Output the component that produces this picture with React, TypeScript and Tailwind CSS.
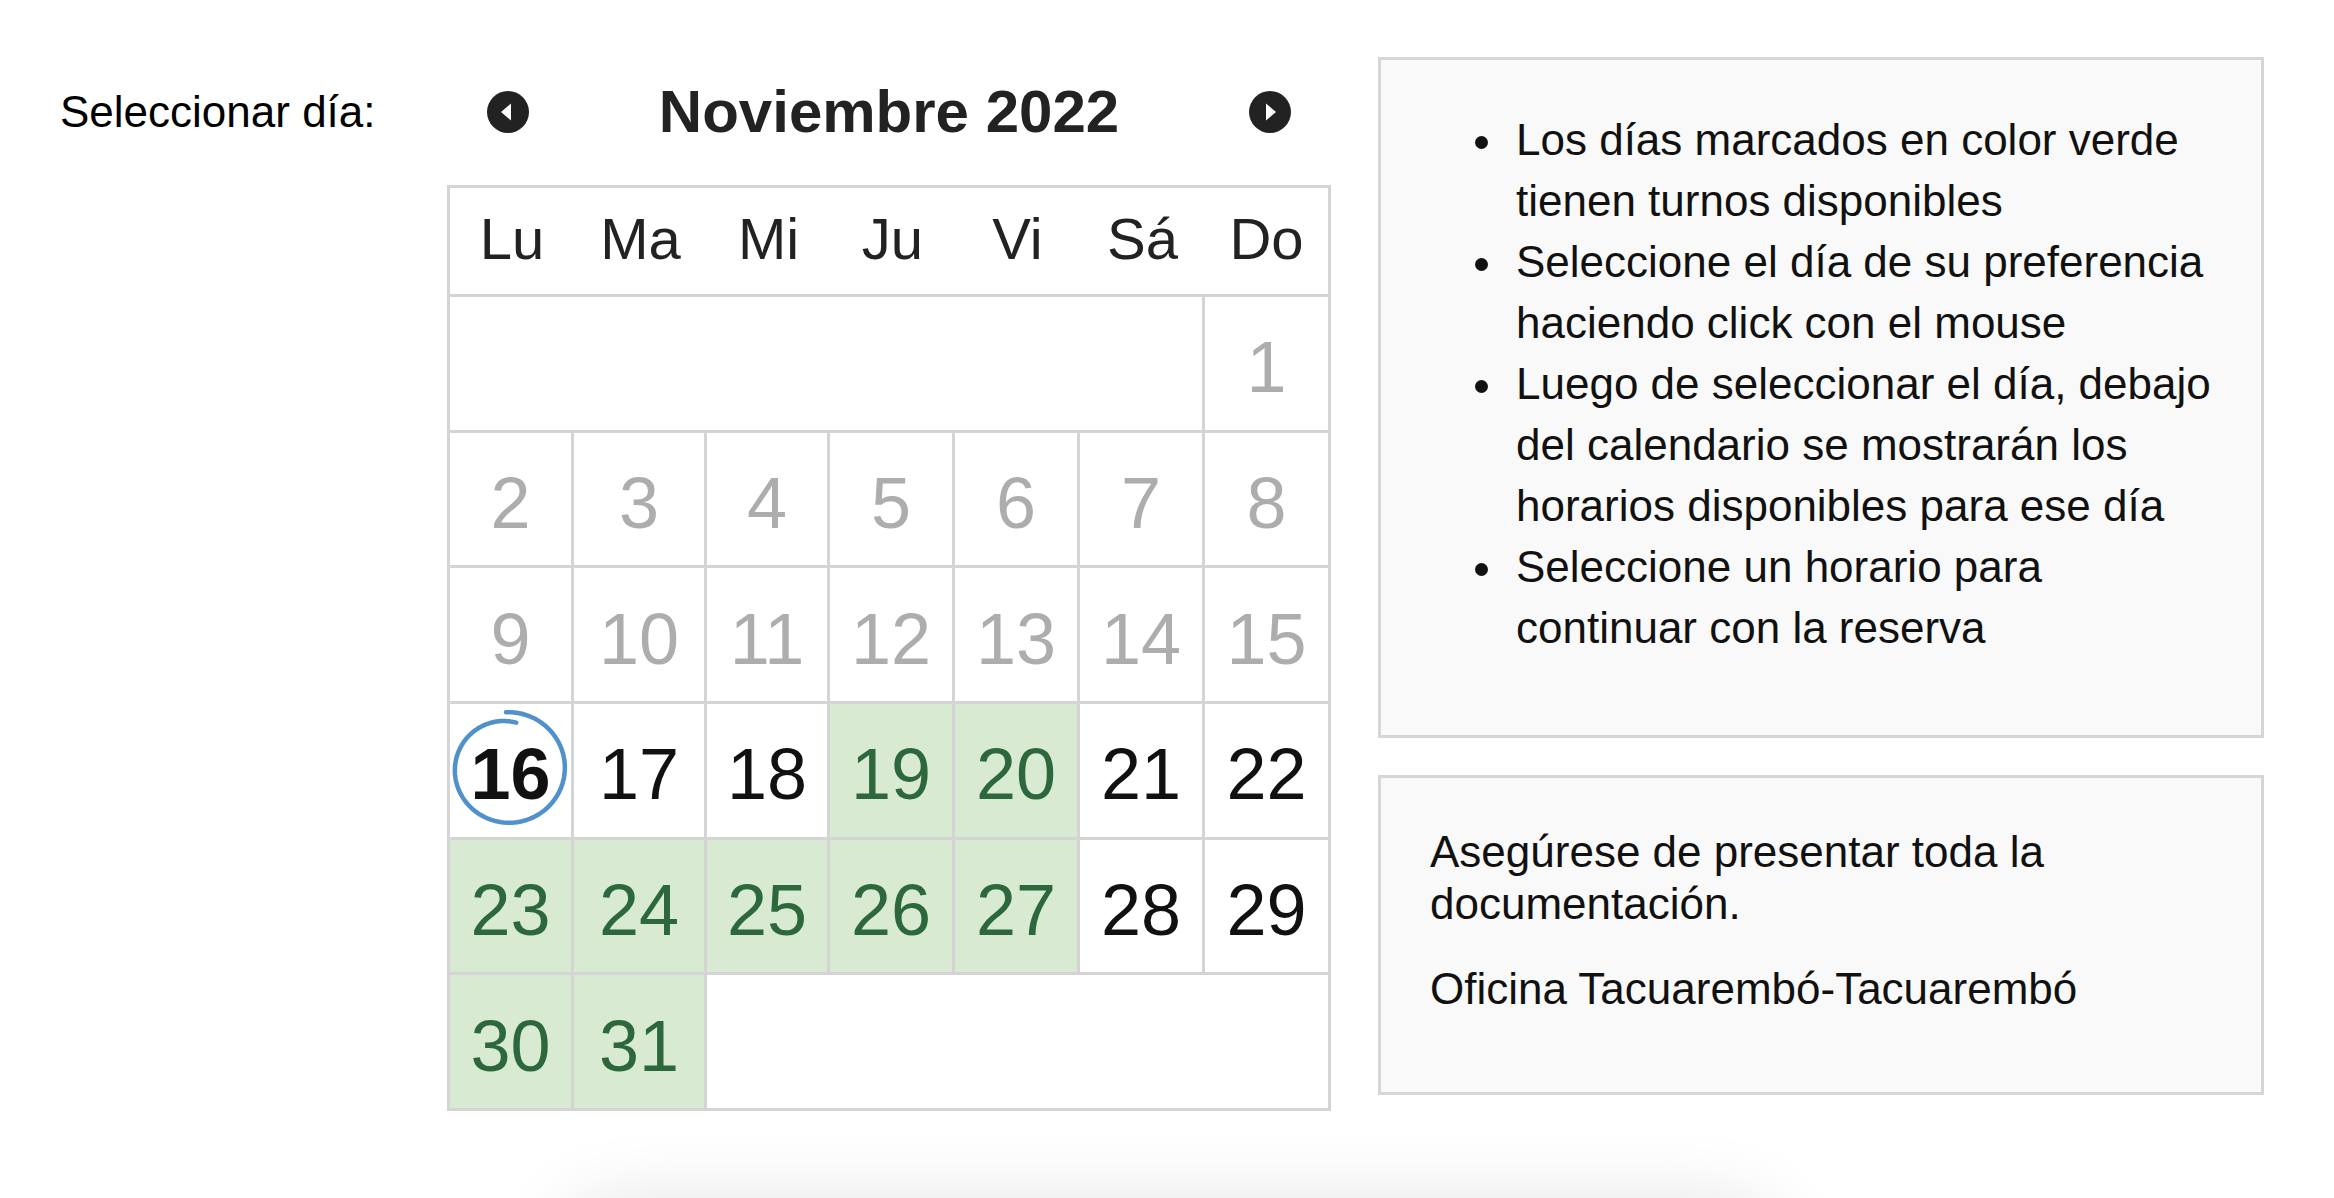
import React from 'react';

type Day = {
  n: number;
  kind: 'past' | 'free' | 'busy' | 'today';
};

const WEEK_DAYS = ['Lu', 'Ma', 'Mi', 'Ju', 'Vi', 'Sá', 'Do'];

const GREEN = [19, 20, 23, 24, 25, 26, 27, 30, 31];

const HINTS = [
  'Los días marcados en color verde tienen turnos disponibles',
  'Seleccione el día de su preferencia haciendo click con el mouse',
  'Luego de seleccionar el día, debajo del calendario se mostrarán los horarios disponibles para ese día',
  'Seleccione un horario para continuar con la reserva',
];

// días de noviembre 2022 tal como los muestra la vista
const days: Day[] = Array.from({ length: 31 }, (_, i) => {
  const n = i + 1;
  if (n < 16) return { n, kind: 'past' };
  if (n === 16) return { n, kind: 'today' };
  if (GREEN.includes(n)) return { n, kind: 'free' };
  return { n, kind: 'busy' };
});

// trazo a mano alrededor del día seleccionado
const circlePath = (() => {
  const cx = 59;
  const cy = 58;
  const pts: string[] = [];
  const start = -80;
  const sweep = 372;
  for (let i = 0; i <= 140; i++) {
    const t = i / 140;
    const a = ((start - sweep * t) * Math.PI) / 180;
    const r = 57 - 10 * Math.pow(1 - t, 3);
    pts.push(
      `${(cx + r * Math.cos(a)).toFixed(2)},${(cy + r * 0.98 * Math.sin(a)).toFixed(2)}`
    );
  }
  return 'M' + pts.join(' L');
})();

const NavArrow = ({ dir }: { dir: 'prev' | 'next' }) => (
  <button
    className="h-[42px] w-[42px] blur-[0.4px]"
    aria-label={dir === 'prev' ? 'Mes anterior' : 'Mes siguiente'}
  >
    <svg width="42" height="42" viewBox="0 0 42 42">
      <circle cx="21" cy="21" r="21" fill="#222222" />
      {dir === 'prev' ? (
        <polygon points="14,21 24,12.5 24,29.5" fill="#ffffff" />
      ) : (
        <polygon points="17,12.5 17,29.5 27,21" fill="#ffffff" />
      )}
    </svg>
  </button>
);

const cellBase =
  'flex items-center justify-center border-r-[3px] border-b-[3px] border-[#d4d4d4] pt-[8px] text-[72px]';

const DayCell = ({ day }: { day: Day }) => {
  if (day.kind === 'past') {
    return <div className={cellBase + ' bg-white text-[#adadad]'}>{day.n}</div>;
  }
  if (day.kind === 'free') {
    return (
      <div className={cellBase + ' cursor-pointer bg-[#d9ead3] text-[#2c683c]'}>
        {day.n}
      </div>
    );
  }
  if (day.kind === 'today') {
    return (
      <div className={cellBase + ' relative bg-white font-bold text-[#111111]'}>
        {day.n}
        <svg
          className="pointer-events-none absolute left-[-1px] top-[6px] overflow-visible"
          width="118"
          height="116"
          viewBox="0 0 118 116"
        >
          <path
            d={circlePath}
            fill="none"
            stroke="#3d85c6"
            strokeWidth="4.5"
            strokeLinecap="round"
            strokeLinejoin="round"
            opacity="0.9"
          />
        </svg>
      </div>
    );
  }
  return <div className={cellBase + ' bg-white text-[#111111]'}>{day.n}</div>;
};

const App = () => {
  return (
    <div className="min-h-screen overflow-hidden bg-white font-['Liberation_Sans',Arial,Helvetica,sans-serif] text-black">
      <div className="flex pl-[60px] pt-[57px]">
        {/* ---------- etiqueta ---------- */}
        <div className="w-[387px] text-[44px] leading-[110px]">Seleccionar día:</div>

        {/* ---------- calendario ---------- */}
        <div className="w-[884px]">
          <div className="flex h-[110px] items-center justify-between px-[40px]">
            <NavArrow dir="prev" />
            <div className="text-[60px] font-bold leading-[110px] text-[#222222]">
              Noviembre 2022
            </div>
            <NavArrow dir="next" />
          </div>

          <div className="mt-[18px] grid grid-cols-[124px_133px_123px_125px_125px_125px_126px] grid-rows-[109px_repeat(6,135.7px)] border-l-[3px] border-t-[3px] border-[#d4d4d4]">
            {WEEK_DAYS.map((d, i) => (
              <div
                key={d}
                className={
                  'flex items-center justify-center border-b-[3px] border-[#d4d4d4] pb-[6px] text-[58px] text-[#222222] ' +
                  (i === 6 ? 'border-r-[3px]' : '')
                }
              >
                {d}
              </div>
            ))}
            <div className="col-span-6 border-b-[3px] border-r-[3px] border-[#d4d4d4]" />
            {days.map((day) => (
              <DayCell key={day.n} day={day} />
            ))}
            <div className="col-span-5 border-b-[3px] border-r-[3px] border-[#d4d4d4]" />
          </div>
        </div>

        {/* ---------- ayuda ---------- */}
        <div className="ml-[47px] flex w-[886px] flex-col gap-[37px]">
          <div className="border-[3px] border-[#d6d6d6] bg-[#f9f9f9] pb-[77px] pl-[94px] pr-[38px] pt-[49px]">
            <ul className="text-[44px] leading-[61px] text-[#111111]">
              {HINTS.map((h) => (
                <li key={h} className="flex">
                  <span className="mr-[28px] mt-[27px] h-[13px] w-[13px] shrink-0 rounded-full bg-[#111111]" />
                  <span>{h}</span>
                </li>
              ))}
            </ul>
          </div>
          <div className="border-[3px] border-[#d6d6d6] bg-[#f9f9f9] pb-[77px] pl-[49px] pr-[40px] pt-[48px] text-[44px] leading-[52px] text-[#111111]">
            <p>Asegúrese de presentar toda la documentación.</p>
            <p className="mt-[33px]">Oficina Tacuarembó-Tacuarembó</p>
          </div>
        </div>
      </div>

      {/* sombra del bloque siguiente */}
      <div className="ml-[560px] mt-[94px] h-[200px] w-[1220px] rounded-[60px] bg-white shadow-[0_0_80px_rgba(0,0,0,0.12)]" />
    </div>
  );
};

export default App;
